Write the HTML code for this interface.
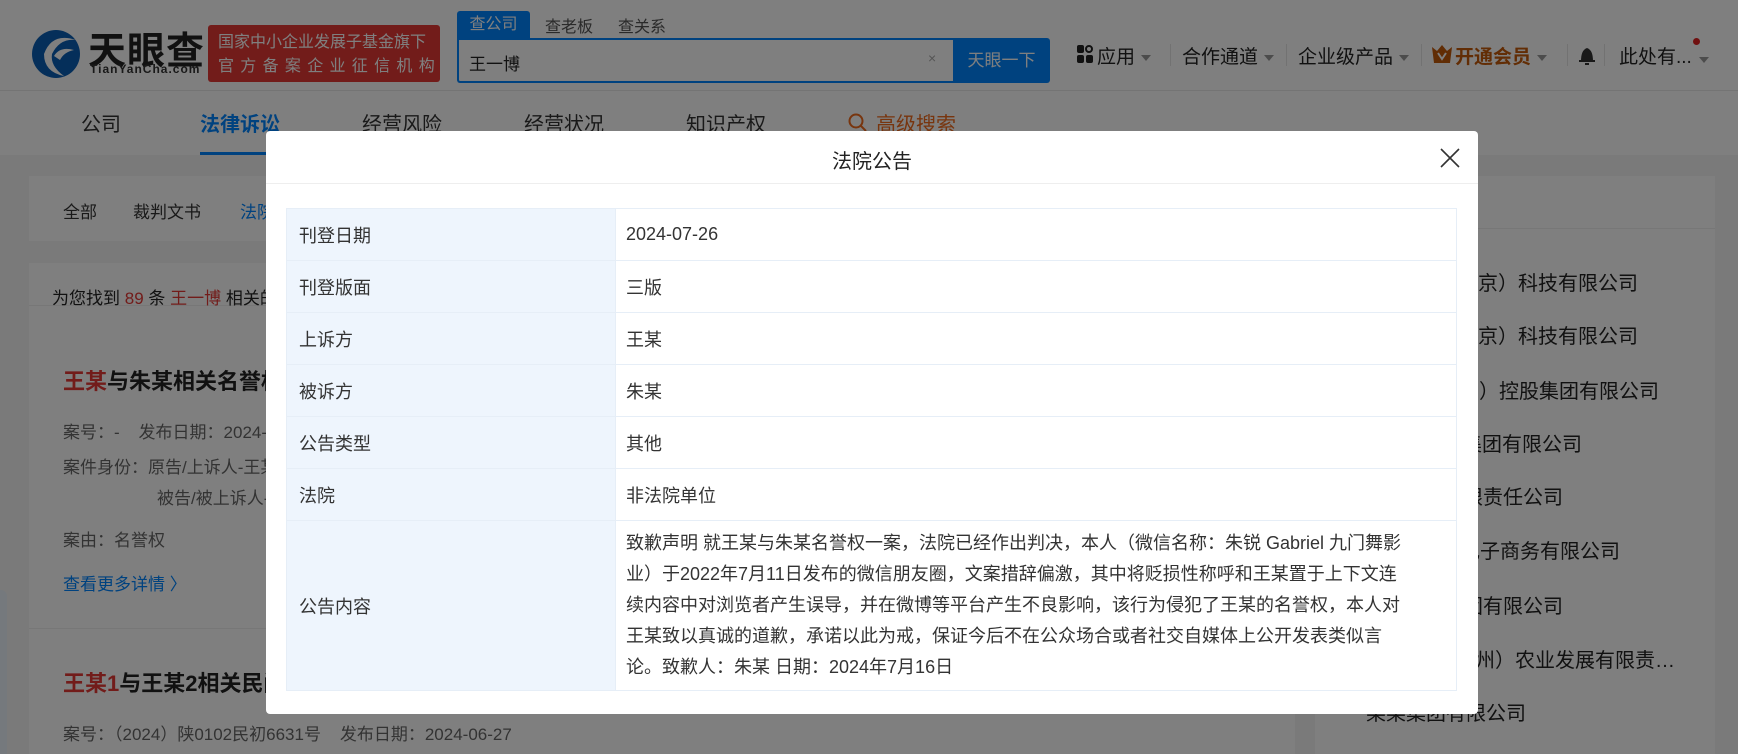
<!DOCTYPE html>
<html><head><meta charset="utf-8">
<style>
*{margin:0;padding:0;box-sizing:border-box}
html,body{width:1738px;height:754px;overflow:hidden}
body{position:relative;background:#f5f5f5;font-family:"Liberation Sans","Noto Sans CJK SC",sans-serif;color:#333}
.abs{position:absolute;white-space:nowrap}
#hdr{position:absolute;left:0;top:0;width:1738px;height:91px;background:#fff;border-bottom:1px solid #e8e8e8}
#nav{position:absolute;left:0;top:91px;width:1738px;height:64px;background:#fff}
.nv{position:absolute;top:108px;font-size:20px;color:#333}
.card{position:absolute;background:#fff}
.g{color:#666;font-size:17px}
.caret{display:inline-block;width:0;height:0;border-left:5px solid transparent;border-right:5px solid transparent;border-top:6px solid #999;vertical-align:middle;margin-left:6px}
#ov{position:absolute;left:0;top:0;width:1738px;height:754px;background:rgba(0,0,0,.5)}
#modal{position:absolute;left:266px;top:131px;width:1212px;height:583px;background:#fff;border-radius:4px}
table{position:absolute;left:20px;top:77px;width:1171px;border-collapse:collapse;font-size:18px}
td{border:1px solid #e6eef7;height:52px;vertical-align:middle}
td.l{background:#eef5fd;width:329px;padding-left:12px;color:#333}
td.v{padding-left:10px;color:#333}
.rl{position:absolute;font-size:20px;color:#222;white-space:nowrap;text-align:right}
</style></head><body>
<div id="hdr">
  <svg class="abs" style="left:30px;top:24px" width="52" height="56" viewBox="0 0 52 56"><circle cx="26" cy="30" r="24" fill="#0a5fb4"/><path d="M14 30 Q22 8 46 16 Q30 14 22 30 Q20 42 34 52 Q14 48 14 30Z" fill="#fff"/><path d="M24 32 Q30 22 44 26 Q34 28 30 36Z" fill="#fff"/></svg>
  <div class="abs" style="left:88px;top:20px;font-size:38px;font-weight:bold;color:#222;letter-spacing:1px">天眼查</div>
  <div class="abs" style="left:90px;top:62px;font-size:12px;font-weight:bold;color:#333;letter-spacing:1px">TianYanCha.com</div>
  <div class="abs" style="left:208px;top:25px;width:232px;height:57px;background:#e53935;border-radius:3px;color:#fff;font-size:16px;padding:6px 0 0 10px;line-height:24px">国家中小企业发展子基金旗下<br><span style="letter-spacing:6.3px">官方备案企业征信机构</span></div>
  <div class="abs" style="left:457px;top:11px;width:73px;height:28px;background:#0084ff;color:#fff;font-size:16px;text-align:center;line-height:28px;border-radius:3px 3px 0 0">查公司</div>
  <div class="abs" style="left:545px;top:13px;font-size:16px;color:#555">查老板</div>
  <div class="abs" style="left:618px;top:13px;font-size:16px;color:#555">查关系</div>
  <div class="abs" style="left:457px;top:38px;width:496px;height:45px;border:2px solid #0084ff;border-right:none;background:#fff;border-radius:0 0 0 3px"></div>
  <div class="abs" style="left:469px;top:50px;font-size:17px;color:#222">王一博</div>
  <div class="abs" style="left:928px;top:50px;font-size:14px;color:#aaa">×</div>
  <div class="abs" style="left:953px;top:38px;width:97px;height:45px;background:#0084ff;color:#fff;font-size:17px;text-align:center;line-height:45px;border-radius:0 3px 3px 0">天眼一下</div>
  <svg class="abs" style="left:1077px;top:45px" width="16" height="18"><rect x="0" y="0" width="7" height="8" rx="2" fill="#222"/><circle cx="12" cy="4" r="3" fill="none" stroke="#222" stroke-width="2"/><rect x="0" y="10" width="7" height="8" rx="2" fill="#222"/><rect x="9" y="10" width="7" height="8" rx="2" fill="#222"/></svg>
  <div class="abs" style="left:1097px;top:42px;font-size:19px;color:#222">应用<span class="caret"></span></div>
  <div class="abs" style="left:1170px;top:44px;width:1px;height:22px;background:#e5e5e5"></div>
  <div class="abs" style="left:1182px;top:42px;font-size:19px;color:#222">合作通道<span class="caret"></span></div>
  <div class="abs" style="left:1286px;top:44px;width:1px;height:22px;background:#e5e5e5"></div>
  <div class="abs" style="left:1298px;top:42px;font-size:19px;color:#222">企业级产品<span class="caret"></span></div>
  <div class="abs" style="left:1421px;top:44px;width:1px;height:22px;background:#e5e5e5"></div>
  <svg class="abs" style="left:1432px;top:45px" width="20" height="18"><path d="M0 2 L5 6 L10 0 L15 6 L20 2 L18 18 L2 18Z" fill="#c35a0a"/><path d="M6 8 L10 14 L14 8" stroke="#fff" stroke-width="2" fill="none"/></svg>
  <div class="abs" style="left:1455px;top:42px;font-size:19px;color:#c55a0a;font-weight:bold">开通会员<span class="caret"></span></div>
  <div class="abs" style="left:1567px;top:44px;width:1px;height:22px;background:#e5e5e5"></div>
  <svg class="abs" style="left:1578px;top:44px" width="18" height="22"><path d="M3 17 Q3 6 9 4 Q15 6 15 17Z" fill="#333"/><rect x="1" y="16" width="16" height="2" fill="#333"/><rect x="7" y="19" width="4" height="2" fill="#333"/></svg>
  <div class="abs" style="left:1604px;top:44px;width:1px;height:22px;background:#e5e5e5"></div>
  <div class="abs" style="left:1619px;top:42px;font-size:19px;color:#222">此处有...</div>
  <div class="abs" style="left:1693px;top:38px;width:7px;height:7px;border-radius:50%;background:#e02020"></div>
  <div class="abs" style="left:1693px;top:51px"><span class="caret"></span></div>
</div>
<div id="nav"></div>
<div class="nv" style="left:81px">公司</div>
<div class="nv" style="left:200px;color:#0084ff;font-weight:bold">法律诉讼</div>
<div class="abs" style="left:200px;top:152px;width:82px;height:3px;background:#0084ff"></div>
<div class="nv" style="left:362px">经营风险</div>
<div class="nv" style="left:524px">经营状况</div>
<div class="nv" style="left:686px">知识产权</div>
<svg class="abs" style="left:848px;top:113px" width="20" height="20"><circle cx="8" cy="8" r="6.5" fill="none" stroke="#f06a1c" stroke-width="2"/><path d="M13 13 L18 18" stroke="#f06a1c" stroke-width="2"/></svg>
<div class="nv" style="left:876px;color:#f06a1c">高级搜索</div>

<div class="card" style="left:29px;top:176px;width:1266px;height:65px"></div>
<div class="abs" style="left:63px;top:198px;font-size:17px;color:#333">全部</div>
<div class="abs" style="left:133px;top:198px;font-size:17px;color:#333">裁判文书</div>
<div class="abs" style="left:240px;top:198px;font-size:17px;color:#0084ff">法院公告</div>

<div class="card" style="left:29px;top:263px;width:1266px;height:491px"></div>
<div class="abs" style="left:29px;top:305px;width:1266px;height:1px;background:#eee"></div>
<div class="abs" style="left:52px;top:284px;font-size:17px;color:#222">为您找到 <span style="color:#e53935">89</span> 条 <span style="color:#e53935">王一博</span> 相关的法院公告</div>
<div class="abs" style="left:63px;top:364px;font-size:22px;font-weight:bold;color:#222"><span style="color:#e53935">王某</span>与朱某相关名誉权纠纷</div>
<div class="abs g" style="left:63px;top:418px">案号：-&nbsp;&nbsp;&nbsp;&nbsp;发布日期：2024-07-26</div>
<div class="abs g" style="left:63px;top:453px">案件身份：原告/上诉人-王某</div>
<div class="abs g" style="left:157px;top:484px">被告/被上诉人-朱某</div>
<div class="abs g" style="left:63px;top:526px">案由：名誉权</div>
<div class="abs" style="left:63px;top:570px;font-size:17px;color:#0084ff">查看更多详情 〉</div>
<div class="abs" style="left:29px;top:628px;width:1266px;height:1px;background:#eee"></div>
<div class="abs" style="left:63px;top:666px;font-size:22px;font-weight:bold;color:#222"><span style="color:#e53935">王某1</span>与王某2相关民间借贷纠纷</div>
<div class="abs g" style="left:63px;top:720px">案号：（2024）陕0102民初6631号&nbsp;&nbsp;&nbsp;&nbsp;发布日期：2024-06-27</div>

<div class="card" style="left:1315px;top:176px;width:400px;height:578px"></div>
<div class="abs" style="left:1315px;top:228px;width:400px;height:1px;background:#eee"></div>
<div class="rl" style="right:100px;top:267px">科技（北京）科技有限公司</div>
<div class="rl" style="right:100px;top:320px">科技（北京）科技有限公司</div>
<div class="rl" style="right:79px;top:375px">阿里巴巴（中国巴）控股集团有限公司</div>
<div class="rl" style="right:156px;top:428px">某某控股集团有限公司</div>
<div class="rl" style="right:175px;top:481px">某某有限责任公司</div>
<div class="rl" style="right:118px;top:535px">某某电子商务有限公司</div>
<div class="rl" style="right:175px;top:590px">某某集团有限公司</div>
<div class="rl" style="right:63px;top:644px">某某（杭州）农业发展有限责…</div>
<div class="rl" style="right:212px;top:697px">某某集团有限公司</div>
<div class="abs" style="left:0;top:590px;width:7px;height:164px;background:#eaf2fb;border-radius:0 6px 0 0"></div>

<div id="ov"></div>
<div id="modal">
  <div class="abs" style="left:0;top:0;width:1212px;height:53px;border-bottom:1px solid #eee"></div>
  <div class="abs" style="left:0;top:14px;width:1212px;text-align:center;font-size:20px;color:#222">法院公告</div>
  <svg class="abs" style="left:1174px;top:17px" width="20" height="20"><path d="M1 1 L19 19 M19 1 L1 19" stroke="#333" stroke-width="1.6"/></svg>
  <table>
    <tr><td class="l">刊登日期</td><td class="v">2024-07-26</td></tr>
    <tr><td class="l">刊登版面</td><td class="v">三版</td></tr>
    <tr><td class="l">上诉方</td><td class="v">王某</td></tr>
    <tr><td class="l">被诉方</td><td class="v">朱某</td></tr>
    <tr><td class="l">公告类型</td><td class="v">其他</td></tr>
    <tr><td class="l">法院</td><td class="v">非法院单位</td></tr>
    <tr><td class="l" style="height:170px">公告内容</td><td class="v" style="line-height:31px;white-space:nowrap;padding-top:4px;padding-bottom:4px">致歉声明 就王某与朱某名誉权一案，法院已经作出判决，本人（微信名称：朱锐 Gabriel 九门舞影<br>业）于2022年7月11日发布的微信朋友圈，文案措辞偏激，其中将贬损性称呼和王某置于上下文连<br>续内容中对浏览者产生误导，并在微博等平台产生不良影响，该行为侵犯了王某的名誉权，本人对<br>王某致以真诚的道歉，承诺以此为戒，保证今后不在公众场合或者社交自媒体上公开发表类似言<br>论。致歉人：朱某 日期：2024年7月16日</td></tr>
  </table>
</div>
</body></html>
